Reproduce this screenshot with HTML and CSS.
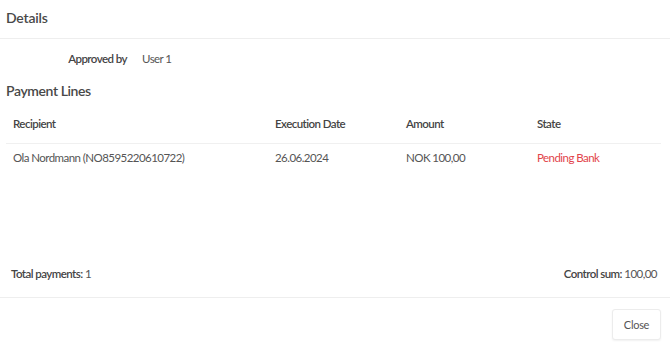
FILE: index.html
```html
<!DOCTYPE html>
<html lang="en">
<head>
    <meta charset="UTF-8">
    <meta name="viewport" content="width=device-width, initial-scale=1.0">
    <title>Details</title>
    <link rel="stylesheet" href="styles.css">
</head>
<body>
    <div class="modal">
        <div class="modal-header">
            <h2>Details</h2>
        </div>

        <div class="modal-body">
            <div class="info-row">
                <span class="info-label">Approved by</span>
                <span class="info-value">User 1</span>
            </div>

            <h3>Payment Lines</h3>

            <table class="lines">
                <thead>
                    <tr>
                        <th class="col-recipient">Recipient</th>
                        <th>Execution Date</th>
                        <th>Amount</th>
                        <th>State</th>
                    </tr>
                </thead>
                <tbody>
                    <tr>
                        <td>Ola Nordmann (NO8595220610722)</td>
                        <td>26.06.2024</td>
                        <td>NOK 100,00</td>
                        <td class="state-pending">Pending Bank</td>
                    </tr>
                </tbody>
            </table>

            <div class="summary">
                <span><b>Total payments:</b> 1</span>
                <span><b>Control sum:</b> 100,00</span>
            </div>
        </div>

        <div class="modal-footer">
            <button class="close-button">Close</button>
        </div>
    </div>
</body>
</html>
```

FILE: styles.css
```css
body {
    font-family: 'Lato', 'Liberation Sans', sans-serif;
    margin: 0;
    padding: 0;
    background-color: #fff;
    color: #555;
    font-size: 11.5px;
    letter-spacing: -0.55px;
}

.modal {
    height: 347px;
    display: flex;
    flex-direction: column;
}

.modal-header {
    height: 38px;
    border-bottom: 1px solid #eeeeee;
    display: flex;
    align-items: center;
    padding-left: 6px;
}

.modal-header h2 {
    margin: 0;
    font-size: 14px;
    font-weight: 600;
    color: #484848;
    letter-spacing: -0.2px;
    padding-bottom: 4px;
}

.modal-body {
    flex: 1;
    display: flex;
    flex-direction: column;
    padding: 0 9px 0 6px;
}

.info-row {
    display: flex;
    align-items: center;
    height: 38px;
}

.info-label {
    width: 121px;
    text-align: right;
    font-weight: 600;
    color: #444;
}

.info-value {
    margin-left: 15px;
}

h3 {
    margin: 0;
    font-size: 14px;
    font-weight: 600;
    color: #484848;
    letter-spacing: -0.4px;
    height: 28px;
    line-height: 28px;
}

.lines {
    width: 100%;
    border-collapse: collapse;
    margin-top: 1px;
}

.lines th,
.lines td {
    text-align: left;
    padding: 0 7px;
    width: 20%;
}

.lines th {
    font-weight: 600;
    color: #444;
    height: 35px;
    padding-bottom: 2px;
    border-bottom: 1px solid #f0f0f0;
}

.lines td {
    height: 26px;
    padding-bottom: 2px;
}

.lines .col-recipient {
    width: 40%;
}

.state-pending {
    color: #e2434a;
}

.summary {
    margin-top: auto;
    display: flex;
    justify-content: space-between;
    padding: 0 4px 0 5px;
    height: 48px;
    align-items: center;
}

.summary b {
    font-weight: 600;
    color: #444;
}

.modal-footer {
    border-top: 1px solid #eeeeee;
    height: 49px;
    display: flex;
    justify-content: flex-end;
    align-items: center;
    padding-right: 9px;
}

.close-button {
    font-family: inherit;
    font-size: 11px;
    letter-spacing: -0.3px;
    color: #555;
    background: #fff;
    border: 1px solid #ececec;
    border-radius: 3px;
    box-shadow: 0 1px 2px rgba(0, 0, 0, 0.06);
    width: 49px;
    height: 31px;
    margin-top: 3px;
    cursor: pointer;
}
```
